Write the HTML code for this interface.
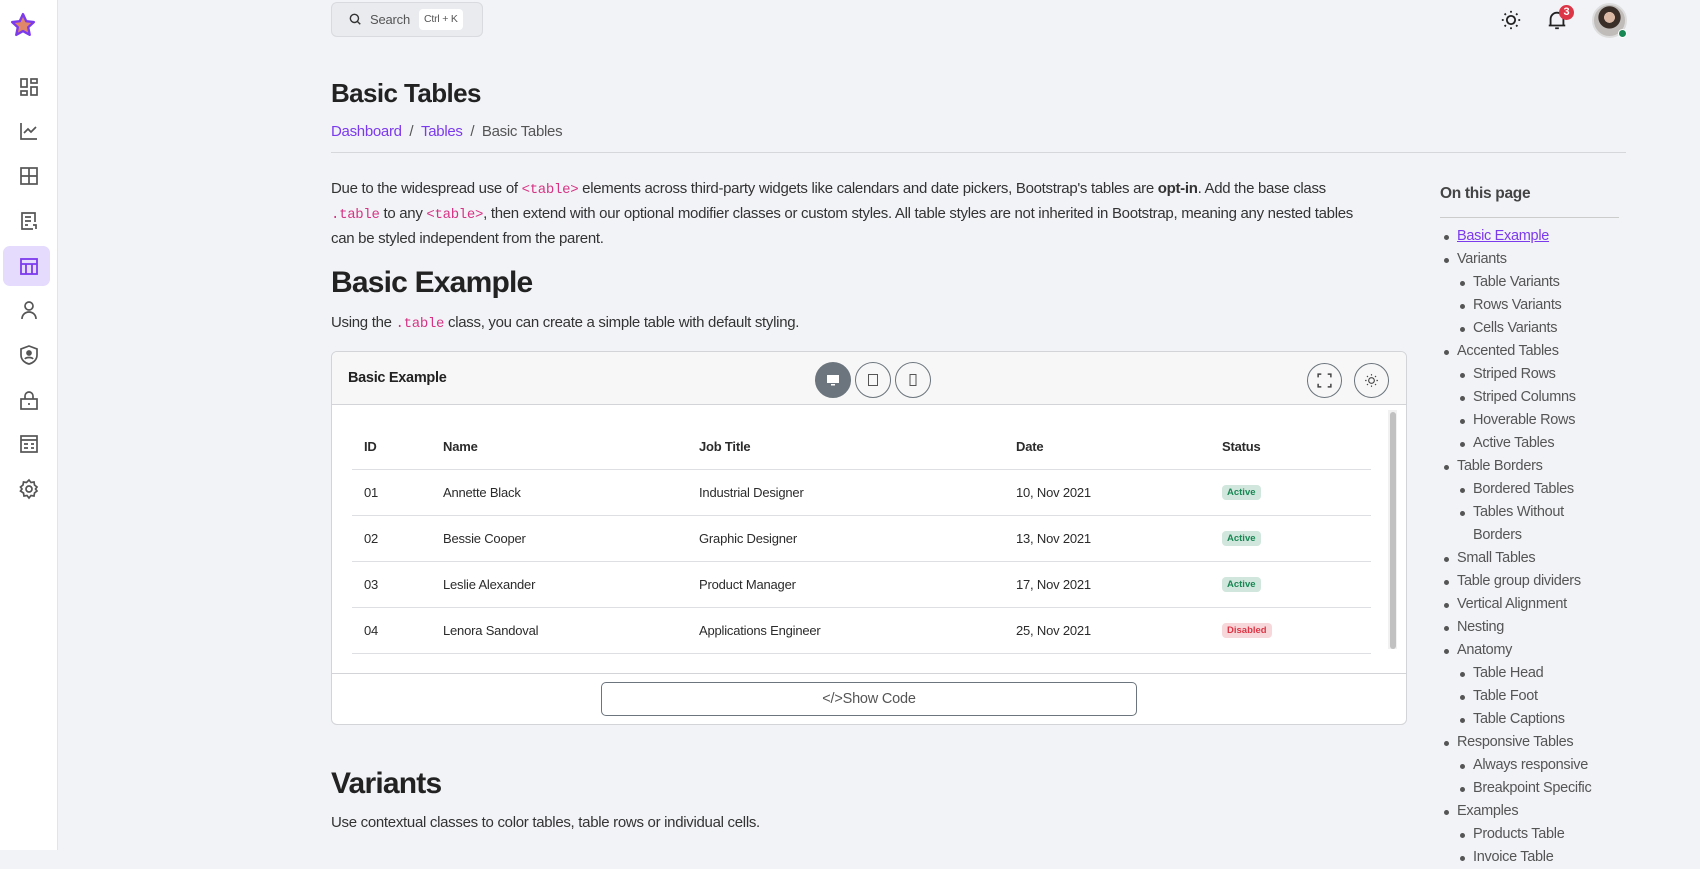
<!DOCTYPE html>
<html><head><meta charset="utf-8"><style>
*{box-sizing:border-box;margin:0;padding:0}
html{background:#f2f3f7}
body{width:1700px;height:850px;overflow:hidden;background:#f2f3f7;font-family:"Liberation Sans",sans-serif;color:#2b2b2b;position:relative;letter-spacing:-0.2px}
.abs{position:absolute}
.side{left:0;top:0;bottom:0;width:58px;min-height:850px;background:#fff;border-right:1px solid #e3e4e8;position:fixed}
.si{position:absolute;left:17px;width:24px;height:24px}
.code{font-family:"Liberation Mono",monospace;color:#d63384;font-size:14px;letter-spacing:-0.3px}
p.t{font-size:15px;line-height:23px;color:#333;letter-spacing:-0.3px}
.toc{left:1440px;top:184px;font-size:14.5px;color:#555;letter-spacing:-0.3px}
.toc li{height:23px;line-height:23px;position:relative;list-style:none}
.toc li:before{content:"";position:absolute;left:-13px;top:10px;width:5px;height:5px;border-radius:50%;background:#555}
.toc .n{padding-left:16px}
.toc .n:before{left:3px}
.row{position:absolute;left:352px;width:1019px;height:46px;border-bottom:1px solid #dedfe3}
.row span{position:absolute;top:15px;font-size:13px;letter-spacing:-0.2px}
.row span.b{position:absolute;top:15px;left:870px;font-size:9.5px;font-weight:bold;padding:2px 5px;border-radius:4px;letter-spacing:0}
.ba{background:#d1e7dd;color:#198754}
.bd{background:#f8d7da;color:#dc3545}
.cb{position:absolute;width:36px;height:36px;border:1px solid #6c757d;border-radius:50%;top:362px}
</style></head><body>
<div class="side">
<svg class="abs" style="left:10px;top:12px" width="26" height="26" viewBox="0 0 24 24"><path d="M12 2l3 6.5 7 .8-5.2 4.8 1.4 7L12 17.6 5.8 21.1l1.4-7L2 9.3l7-.8z" fill="#e0876a" stroke="#7c3aed" stroke-width="2.2" stroke-linejoin="round"/></svg>
<svg class="si" style="top:75px" viewBox="0 0 24 24" fill="none" stroke="#555" stroke-width="1.7"><rect x="4" y="4" width="6" height="8"/><rect x="14" y="4" width="6" height="4"/><rect x="4" y="16" width="6" height="4"/><rect x="14" y="12" width="6" height="8"/></svg>
<svg class="si" style="top:119px" viewBox="0 0 24 24" fill="none" stroke="#555" stroke-width="1.7"><path d="M4 4v16h16M7 14l4-4 3 3 5-5"/></svg>
<svg class="si" style="top:164px" viewBox="0 0 24 24" fill="none" stroke="#555" stroke-width="1.7"><rect x="4" y="4" width="16" height="16"/><path d="M12 4v16M4 12h16"/></svg>
<svg class="si" style="top:209px" viewBox="0 0 24 24" fill="none" stroke="#555" stroke-width="1.7"><path d="M18 13V4H5v16h11M8 8h6M8 12h6M8 16h3M16 16h3v4"/></svg>
<div class="abs" style="left:3px;top:246px;width:47px;height:40px;background:#e4dbfd;border-radius:7px"></div>
<svg class="si" style="top:254px" viewBox="0 0 24 24" fill="none" stroke="#7c3aed" stroke-width="1.8"><rect x="4" y="5" width="16" height="15"/><path d="M4 10h16M9 10v10M15 10v10"/></svg>
<svg class="si" style="top:298px" viewBox="0 0 24 24" fill="none" stroke="#555" stroke-width="1.7"><circle cx="12" cy="8" r="4"/><path d="M5 21c0-4 3-7 7-7s7 3 7 7"/></svg>
<svg class="si" style="top:343px" viewBox="0 0 24 24" fill="none" stroke="#555" stroke-width="1.7"><path d="M12 3l8 3v6c0 5-4 8-8 9-4-1-8-4-8-9V6z"/><circle cx="12" cy="10" r="2" fill="#555"/><path d="M8 16c1-2 7-2 8 0"/></svg>
<svg class="si" style="top:388px" viewBox="0 0 24 24" fill="none" stroke="#555" stroke-width="1.7"><rect x="4" y="11" width="16" height="10"/><path d="M8 11V8a4 4 0 018 0v3M12 15v2"/></svg>
<svg class="si" style="top:432px" viewBox="0 0 24 24" fill="none" stroke="#555" stroke-width="1.7"><rect x="4" y="4" width="16" height="16"/><path d="M4 8h16M7 12h4M7 16h4M14 12h3M14 16h3"/></svg>
<svg class="si" style="top:477px" viewBox="0 0 24 24" fill="none" stroke="#555" stroke-width="1.7"><circle cx="12" cy="12" r="3"/><path d="M12 3l2 2.5 3-.5.5 3 2.5 2-1.5 2 1.5 2-2.5 2-.5 3-3-.5-2 2.5-2-2.5-3 .5-.5-3L3.5 14 5 12 3.5 10 6 8l.5-3 3 .5z"/></svg>
</div>

<div class="abs" style="left:331px;top:2px;width:152px;height:35px;background:#e9ebef;border:1px solid #d8dadf;border-radius:6px"></div>
<svg class="abs" style="left:348px;top:12px" width="14" height="14" viewBox="0 0 24 24" fill="none" stroke="#333" stroke-width="2.4"><circle cx="11" cy="11" r="7"/><path d="M16 16l5 5"/></svg>
<div class="abs" style="left:370px;top:12px;font-size:13px;color:#555">Search</div>
<div class="abs" style="left:419px;top:9px;height:21px;padding:0 5px;background:#fff;border-radius:4px;font-size:10.5px;line-height:21px;color:#555">Ctrl + K</div>

<svg class="abs" style="left:1500px;top:9px" width="22" height="22" viewBox="0 0 24 24" fill="none" stroke="#222" stroke-width="2"><circle cx="12" cy="12" r="4.5"/><path d="M12 2v2M12 20v2M2 12h2M20 12h2M5 5l1.4 1.4M17.6 17.6L19 19M5 19l1.4-1.4M17.6 6.4L19 5"/></svg>
<svg class="abs" style="left:1546px;top:9px" width="22" height="22" viewBox="0 0 24 24" fill="none" stroke="#222" stroke-width="2"><path d="M5 18V11a7 7 0 0114 0v7M3 18h18M10 21h4"/></svg>
<div class="abs" style="left:1559px;top:5px;width:15px;height:15px;border-radius:50%;background:#dc3545;color:#fff;font-size:11px;font-weight:bold;text-align:center;line-height:15px">3</div>
<div class="abs" style="left:1592px;top:3px;width:35px;height:35px;border-radius:50%;background:radial-gradient(circle at 50% 40%,#d9b8a6 0 22%,#3a2e28 23% 45%,#bfbcba 47%);border:2px solid #ddd"></div>
<div class="abs" style="left:1618px;top:29px;width:9px;height:9px;border-radius:50%;background:#198754;border:1.5px solid #fff"></div>

<div class="abs" style="left:331px;top:78px;font-size:26px;font-weight:bold;color:#222;letter-spacing:-0.6px">Basic Tables</div>
<div class="abs" style="left:331px;top:123px;font-size:15px;color:#555;letter-spacing:-0.3px"><span style="color:#7c3aed">Dashboard</span>&nbsp;&nbsp;/&nbsp;&nbsp;<span style="color:#7c3aed">Tables</span>&nbsp;&nbsp;/&nbsp;&nbsp;Basic Tables</div>
<div class="abs" style="left:331px;top:152px;width:1295px;height:1px;background:#d6d7db"></div>

<p class="abs t" style="left:331px;top:177px;width:1080px;white-space:nowrap">Due to the widespread use of <span class="code">&lt;table&gt;</span> elements across third-party widgets like calendars and date pickers, Bootstrap's tables are <b>opt-in</b>. Add the base class<br><span class="code">.table</span> to any <span class="code">&lt;table&gt;</span>, then extend with our optional modifier classes or custom styles. All table styles are not inherited in Bootstrap, meaning any nested tables<br>can be styled independent from the parent.</p>
<div class="abs" style="left:331px;top:266px;font-size:30px;font-weight:bold;color:#222;letter-spacing:-0.8px">Basic Example</div>
<p class="abs t" style="left:331px;top:311px">Using the <span class="code">.table</span> class, you can create a simple table with default styling.</p>

<div class="abs" style="left:331px;top:351px;width:1076px;height:374px;background:#fff;border:1px solid #d3d4d8;border-radius:6px;overflow:hidden">
<div style="height:53px;background:#f7f7f7;border-bottom:1px solid #d3d4d8"></div>
</div>
<div class="abs" style="left:348px;top:370px;font-size:14.5px;font-weight:bold;color:#222;letter-spacing:-0.3px">Basic Example</div>
<div class="cb" style="left:815px;background:#6c757d"></div>
<svg class="abs" style="left:825px;top:372px" width="16" height="16" viewBox="0 0 16 16" fill="#fff"><rect x="2" y="3" width="12" height="8"/><rect x="6" y="12" width="4" height="1.5"/></svg>
<div class="cb" style="left:855px"></div>
<svg class="abs" style="left:865px;top:372px" width="16" height="16" viewBox="0 0 16 16" fill="none" stroke="#555"><rect x="3.5" y="2.5" width="9" height="11"/></svg>
<div class="cb" style="left:895px"></div>
<svg class="abs" style="left:905px;top:372px" width="16" height="16" viewBox="0 0 16 16" fill="none" stroke="#555"><rect x="5" y="2.5" width="6" height="11"/></svg>
<div class="cb" style="left:1307px;width:35px;height:35px;top:363px"></div>
<svg class="abs" style="left:1316px;top:372px" width="17" height="17" viewBox="0 0 16 16" fill="none" stroke="#444" stroke-width="1.4"><path d="M2 5V2h3M11 2h3v3M14 11v3h-3M5 14H2v-3"/></svg>
<div class="cb" style="left:1354px;width:35px;height:35px;top:363px"></div>
<svg class="abs" style="left:1363px;top:372px" width="17" height="17" viewBox="0 0 24 24" fill="none" stroke="#444" stroke-width="1.6"><circle cx="12" cy="12" r="4"/><path d="M12 3v2M12 19v2M3 12h2M19 12h2M5.6 5.6l1.4 1.4M17 17l1.4 1.4M5.6 18.4L7 17M17 7l1.4-1.4"/></svg>

<div class="abs" style="left:1388px;top:410px;width:9px;height:239px;background:#f1f1f1"></div>
<div class="abs" style="left:1390px;top:412px;width:6px;height:237px;background:#c1c1c1;border-radius:3px"></div>

<div class="row" style="top:424px"><span style="left:12px;font-weight:bold">ID</span><span style="left:91px;font-weight:bold">Name</span><span style="left:347px;font-weight:bold">Job Title</span><span style="left:664px;font-weight:bold">Date</span><span style="left:870px;font-weight:bold">Status</span></div>
<div class="row" style="top:470px"><span style="left:12px">01</span><span style="left:91px">Annette Black</span><span style="left:347px">Industrial Designer</span><span style="left:664px">10, Nov 2021</span><span class="b ba">Active</span></div>
<div class="row" style="top:516px"><span style="left:12px">02</span><span style="left:91px">Bessie Cooper</span><span style="left:347px">Graphic Designer</span><span style="left:664px">13, Nov 2021</span><span class="b ba">Active</span></div>
<div class="row" style="top:562px"><span style="left:12px">03</span><span style="left:91px">Leslie Alexander</span><span style="left:347px">Product Manager</span><span style="left:664px">17, Nov 2021</span><span class="b ba">Active</span></div>
<div class="row" style="top:608px"><span style="left:12px">04</span><span style="left:91px">Lenora Sandoval</span><span style="left:347px">Applications Engineer</span><span style="left:664px">25, Nov 2021</span><span class="b bd">Disabled</span></div>

<div class="abs" style="left:332px;top:673px;width:1074px;height:1px;background:#d3d4d8"></div>
<div class="abs" style="left:601px;top:682px;width:536px;height:34px;border:1px solid #6c757d;border-radius:5px;text-align:center;line-height:32px;font-size:14.5px;color:#555">&lt;/&gt;Show Code</div>

<div class="abs" style="left:331px;top:767px;font-size:30px;font-weight:bold;color:#222;letter-spacing:-0.8px">Variants</div>
<p class="abs t" style="left:331px;top:811px">Use contextual classes to color tables, table rows or individual cells.</p>

<div class="abs" style="left:1440px;top:185px;font-size:15.5px;font-weight:bold;color:#444;letter-spacing:-0.3px">On this page</div>
<div class="abs" style="left:1440px;top:217px;width:179px;height:1px;background:#ccc"></div>
<ul class="abs toc" style="top:225px;left:1457px">
<li><span style="color:#7c3aed;text-decoration:underline">Basic Example</span></li>
<li>Variants</li><li class="n">Table Variants</li><li class="n">Rows Variants</li><li class="n">Cells Variants</li>
<li>Accented Tables</li><li class="n">Striped Rows</li><li class="n">Striped Columns</li><li class="n">Hoverable Rows</li><li class="n">Active Tables</li>
<li>Table Borders</li><li class="n">Bordered Tables</li><li class="n">Tables Without</li><li class="n"><span>Borders</span></li>
<li>Small Tables</li><li>Table group dividers</li><li>Vertical Alignment</li><li>Nesting</li>
<li>Anatomy</li><li class="n">Table Head</li><li class="n">Table Foot</li><li class="n">Table Captions</li>
<li>Responsive Tables</li><li class="n">Always responsive</li><li class="n">Breakpoint Specific</li>
<li>Examples</li><li class="n">Products Table</li><li class="n">Invoice Table</li>
</ul>
<style>.toc li:nth-child(14):before{display:none}</style>
</body></html>
